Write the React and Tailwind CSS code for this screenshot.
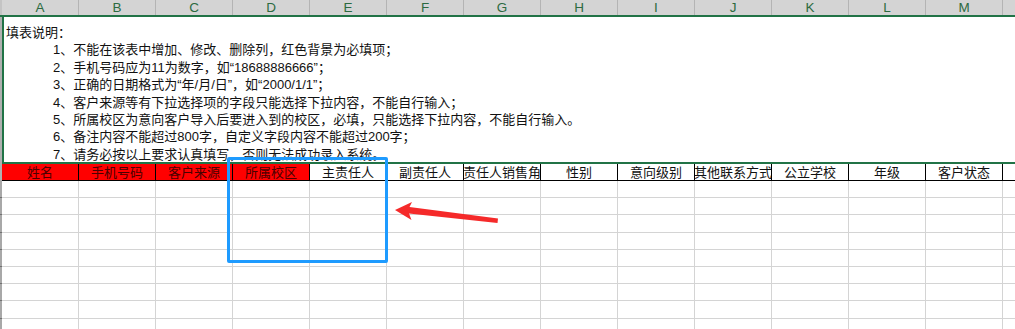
import React from "react";

const letters = ["A", "B", "C", "D", "E", "F", "G", "H", "I", "J", "K", "L", "M"];
const heads = [
  { t: "姓名", red: true },
  { t: "手机号码", red: true },
  { t: "客户来源", red: true },
  { t: "所属校区", red: true },
  { t: "主责任人" },
  { t: "副责任人" },
  { t: "主责任人销售角色" },
  { t: "性别" },
  { t: "意向级别" },
  { t: "其他联系方式" },
  { t: "公立学校" },
  { t: "年级" },
  { t: "客户状态" },
];
const lines = [
  "1、不能在该表中增加、修改、删除列，红色背景为必填项；",
  "2、手机号码应为11为数字，如“18688886666”；",
  "3、正确的日期格式为“年/月/日”，如“2000/1/1”；",
  "4、客户来源等有下拉选择项的字段只能选择下拉内容，不能自行输入；",
  "5、所属校区为意向客户导入后要进入到的校区，必填，只能选择下拉内容，不能自行输入。",
  "6、备注内容不能超过800字，自定义字段内容不能超过200字；",
  "7、请务必按以上要求认真填写，否则无法成功录入系统。",
];

export default function App() {
  const font = { fontFamily: '"Liberation Sans", "Noto Sans CJK SC", sans-serif' };
  return (
    <div className="relative w-[1015px] h-[329px] overflow-hidden bg-white" style={font}>
      {/* column letters */}
      <div className="flex h-[17px] bg-[#d4d4d4] border-b-2 border-[#217346]">
        <div className="w-[2px] shrink-0 bg-[#c4c4c4]" />
        {letters.map((l) => (
          <div
            key={l}
            className="w-[77px] shrink-0 border-r border-[#b4b4b4] flex items-center justify-center text-[13.5px] leading-none text-[#2c6a40]"
          >
            {l}
          </div>
        ))}
        <div className="flex-1" />
      </div>

      {/* merged instruction cell */}
      <div className="flex h-[147px]">
        <div className="w-[2px] shrink-0 bg-[#b0b0b0]" />
        <div className="flex-1 border-l-2 border-b-2 border-[#217346] overflow-hidden pt-[7px] text-[13px] leading-[17.4px] text-[#111] whitespace-nowrap">
          <div className="pl-[2px]">填表说明：</div>
          {lines.map((l) => (
            <div key={l} className="pl-[49px]">
              {l}
            </div>
          ))}
        </div>
      </div>

      {/* header row */}
      <div className="flex h-[17px]">
        <div className="w-[2px] shrink-0 bg-[#b0b0b0]" />
        {heads.map((h) => (
          <div
            key={h.t}
            className={`w-[77px] shrink-0 border-r border-b border-black overflow-hidden flex items-center justify-center text-[13px] leading-none whitespace-nowrap ${
              h.red ? "bg-[#ff0000] text-[#4a0000]" : "bg-white text-[#111]"
            }`}
          >
            {h.t}
          </div>
        ))}
        <div className="flex-1 border-b border-black" />
      </div>

      {/* grid rows */}
      {Array.from({ length: 9 }).map((_, r) => (
        <div key={r} className="flex h-[17.2px]">
          <div className="w-[2px] shrink-0 bg-[#a8a8a8] border-b border-[#707070]" />
          {letters.map((l) => (
            <div key={l} className="w-[77px] shrink-0 border-r border-b border-[#d4d4d4]" />
          ))}
          <div className="flex-1 border-b border-[#d4d4d4]" />
        </div>
      ))}

      {/* annotation: blue box */}
      <div className="absolute left-[227px] top-[157px] w-[161px] h-[106px] border-[3px] border-[#1e9bff] rounded-[2px]" />

      {/* annotation: red arrow */}
      <svg className="absolute left-0 top-0" width="1015" height="329" viewBox="0 0 1015 329">
        <polygon
          points="395,210 412,202 409.5,207 498,218.5 497.5,223 409,213.5 411.5,220"
          fill="#f52a2a"
        />
      </svg>
    </div>
  );
}
